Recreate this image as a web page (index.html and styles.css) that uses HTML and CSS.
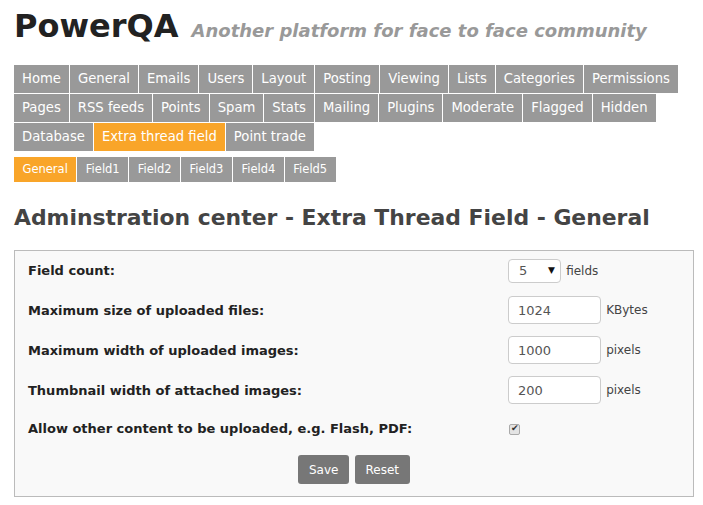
FILE: index.html
```html
<!DOCTYPE html>
<html lang="en">
<head>
    <meta charset="UTF-8">
    <title>PowerQA - Admin</title>
    <link rel="stylesheet" href="styles.css">
</head>
<body>
    <div class="header">
        <span class="logo">PowerQA</span>
        <span class="tagline">Another platform for face to face community</span>
    </div>

    <ul class="nav">
        <li><a href="#">Home</a></li>
        <li><a href="#">General</a></li>
        <li><a href="#">Emails</a></li>
        <li><a href="#">Users</a></li>
        <li><a href="#">Layout</a></li>
        <li><a href="#">Posting</a></li>
        <li><a href="#">Viewing</a></li>
        <li><a href="#">Lists</a></li>
        <li><a href="#">Categories</a></li>
        <li><a href="#">Permissions</a></li>
        <li><a href="#">Pages</a></li>
        <li><a href="#">RSS feeds</a></li>
        <li><a href="#">Points</a></li>
        <li><a href="#">Spam</a></li>
        <li><a href="#">Stats</a></li>
        <li><a href="#">Mailing</a></li>
        <li><a href="#">Plugins</a></li>
        <li><a href="#">Moderate</a></li>
        <li><a href="#">Flagged</a></li>
        <li><a href="#">Hidden</a></li>
        <li><a href="#">Database</a></li>
        <li class="selected"><a href="#">Extra thread field</a></li>
        <li><a href="#">Point trade</a></li>
    </ul>

    <ul class="subnav">
        <li class="selected"><a href="#">General</a></li>
        <li><a href="#">Field1</a></li>
        <li><a href="#">Field2</a></li>
        <li><a href="#">Field3</a></li>
        <li><a href="#">Field4</a></li>
        <li><a href="#">Field5</a></li>
    </ul>

    <h1>Adminstration center - Extra Thread Field - General</h1>

    <form class="form-box">
        <table class="form-table">
            <tr class="row-first">
                <td class="label">Field count:</td>
                <td class="field">
                    <span class="select-wrap">
                        <select class="count">
                            <option>5</option>
                        </select>
                    </span>
                    <span class="unit">fields</span>
                </td>
            </tr>
            <tr>
                <td class="label">Maximum size of uploaded files:</td>
                <td class="field"><input type="text" value="1024"> <span class="unit">KBytes</span></td>
            </tr>
            <tr>
                <td class="label">Maximum width of uploaded images:</td>
                <td class="field"><input type="text" value="1000"> <span class="unit">pixels</span></td>
            </tr>
            <tr>
                <td class="label">Thumbnail width of attached images:</td>
                <td class="field"><input type="text" value="200"> <span class="unit">pixels</span></td>
            </tr>
            <tr class="row-last">
                <td class="label">Allow other content to be uploaded, e.g. Flash, PDF:</td>
                <td class="field"><input type="checkbox" class="check" checked></td>
            </tr>
        </table>
        <div class="buttons">
            <button type="button">Save</button>
            <button type="button">Reset</button>
        </div>
    </form>
</body>
</html>
```

FILE: styles.css
```css
body {
    font-family: "DejaVu Sans", Verdana, sans-serif;
    margin: 0;
    padding: 0 14px;
    background-color: #fff;
    color: #222;
}
.header {
    padding-top: 7px;
    height: 58px;
    box-sizing: border-box;
    white-space: nowrap;
}
.logo {
    font-size: 32px;
    font-weight: bold;
    color: #222;
}
.tagline {
    font-size: 18px;
    font-weight: bold;
    font-style: italic;
    color: #999;
    margin-left: 8px;
}
.nav, .subnav {
    list-style: none;
    margin: 0;
    padding: 0;
    display: flex;
    flex-wrap: wrap;
    width: 680px;
}
.nav {
    margin-top: 7px;
}
.nav li, .subnav li {
    margin: 0 1px 1px 0;
}
.nav a, .subnav a {
    display: block;
    background-color: #999;
    color: #fff;
    text-decoration: none;
}
.nav a {
    font-size: 13.2px;
    line-height: 28px;
    padding: 0 8px;
}
.subnav {
    margin-top: 5px;
}
.subnav a {
    font-size: 11.5px;
    line-height: 25px;
    padding: 0 8.5px;
}
.nav .selected a, .subnav .selected a {
    background-color: #f9a529;
}
h1 {
    font-size: 21.9px;
    color: #444;
    margin: 22px 0 20px;
}
.form-box {
    width: 680px;
    box-sizing: border-box;
    border: 1px solid #bbb;
    background-color: #f9f9f9;
    padding: 0 13px 12px;
}
.form-table {
    border-collapse: collapse;
    width: 100%;
}
.form-table td {
    height: 40px;
    padding: 0;
    font-size: 13px;
}
.form-table .row-first td {
    height: 39px;
}
.form-table .row-last td {
    height: 36px;
}
.label {
    font-weight: bold;
    width: 480px;
}
.field {
    color: #444;
}
.form-table input[type="text"] {
    width: 93px;
    height: 28px;
    box-sizing: border-box;
    border: 1px solid #ccc;
    border-radius: 4px;
    padding: 0 9px;
    font: 13px "DejaVu Sans", Verdana, sans-serif;
    color: #555;
    background: #fff;
    vertical-align: middle;
}
.select-wrap {
    position: relative;
    display: inline-block;
    vertical-align: middle;
}
.select-wrap::after {
    content: "\25BC";
    position: absolute;
    right: 6px;
    top: 6px;
    font-size: 9px;
    color: #111;
    pointer-events: none;
}
.count {
    -webkit-appearance: none;
    appearance: none;
    width: 53px;
    height: 24px;
    border: 1px solid #ccc;
    border-radius: 4px;
    background: #fff;
    font: 13px "DejaVu Sans", Verdana, sans-serif;
    color: #555;
    padding: 0 10px;
    display: block;
}
.unit {
    font-size: 12px;
    vertical-align: middle;
    margin-left: 1px;
}
.check {
    -webkit-appearance: none;
    appearance: none;
    width: 11px;
    height: 11px;
    margin: 0 0 0 1px;
    border: 1px solid #aaa;
    border-radius: 2px;
    background: #e4e4e4;
    position: relative;
    vertical-align: middle;
}
.check:checked::after {
    content: "\2714";
    position: absolute;
    left: 1px;
    top: -2px;
    font-size: 9px;
    color: #333;
}
.buttons {
    text-align: center;
    padding-top: 9px;
}
button {
    background-color: #777;
    color: #fff;
    border: none;
    border-radius: 3px;
    height: 29px;
    padding: 0 11px;
    font: 12px "DejaVu Sans", Verdana, sans-serif;
    cursor: pointer;
}
```
